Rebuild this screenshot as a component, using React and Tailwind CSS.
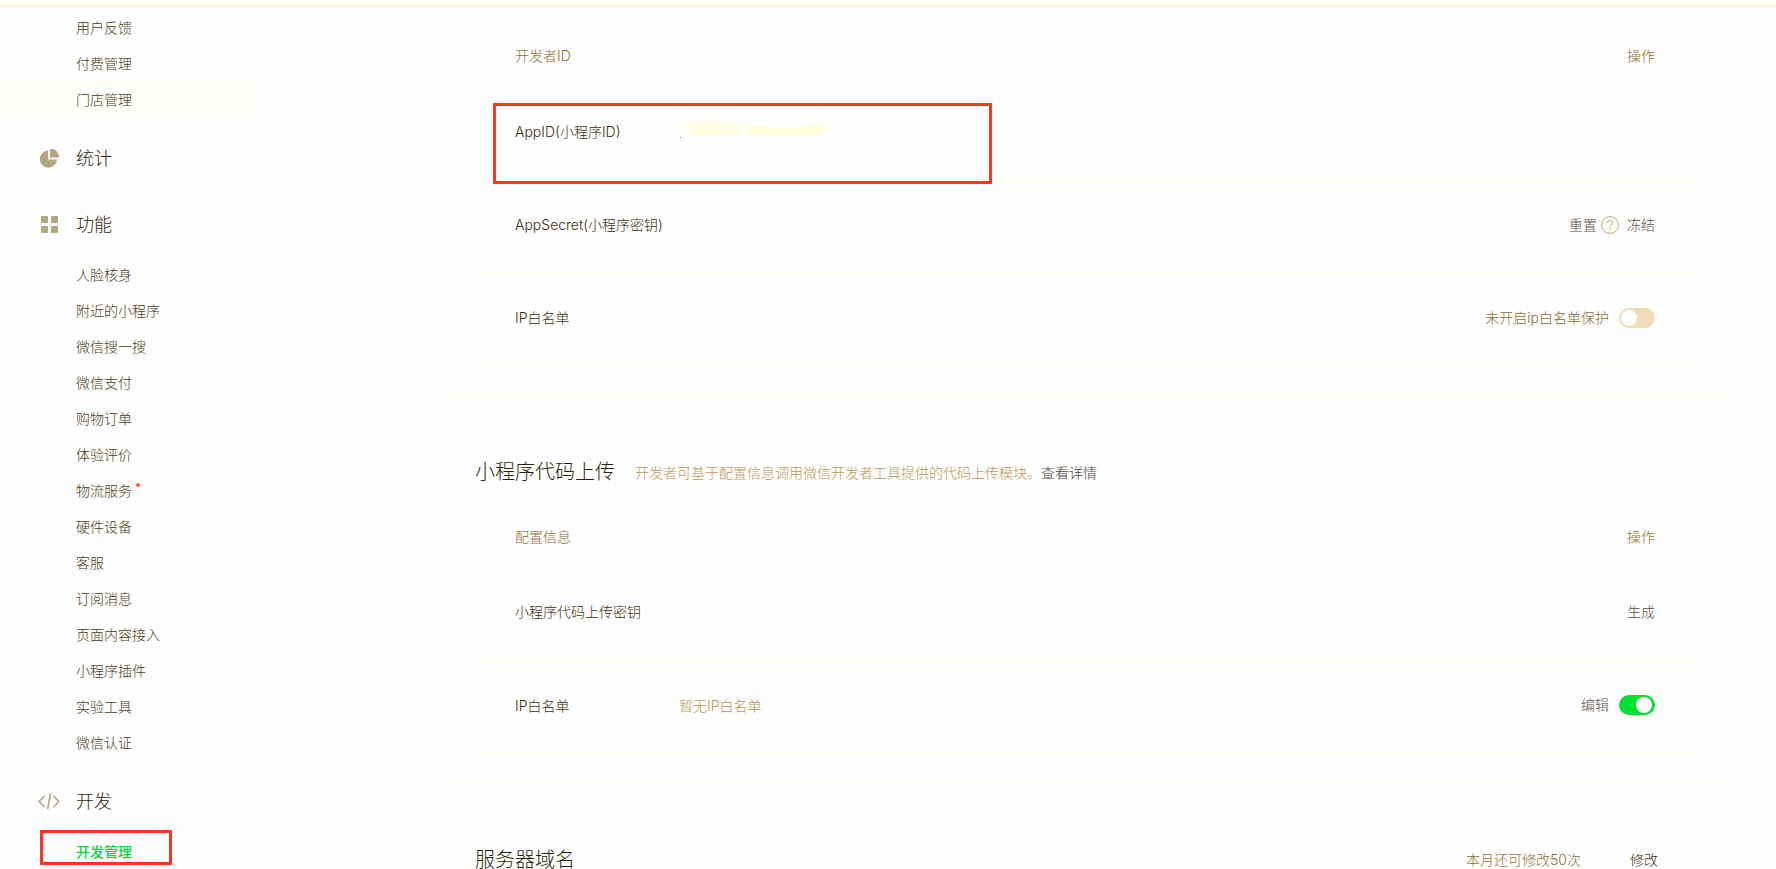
import clsx from "clsx";

const menuTop = ["用户反馈", "付费管理", "门店管理"];

const menuFeatures = [
  { label: "人脸核身" },
  { label: "附近的小程序" },
  { label: "微信搜一搜" },
  { label: "微信支付" },
  { label: "购物订单" },
  { label: "体验评价" },
  { label: "物流服务", dot: true },
  { label: "硬件设备" },
  { label: "客服" },
  { label: "订阅消息" },
  { label: "页面内容接入" },
  { label: "小程序插件" },
  { label: "实验工具" },
  { label: "微信认证" },
];

const PieIcon = () => (
  <svg className="w-5 h-5" viewBox="0 0 20 20" fill="#b5a682">
    <path d="M8 1.5A8.6 8.6 0 1 0 17 10.5H8z" />
    <path d="M10 -0.5A8.8 8.8 0 0 1 19 8.5H10z" />
  </svg>
);

const GridIcon = () => (
  <svg className="w-5 h-5" viewBox="0 0 20 20" fill="#b5a682">
    <rect x="1" y="1" width="7" height="7" rx="0.8" />
    <rect x="11" y="1" width="7" height="7" rx="0.8" />
    <rect x="1" y="11" width="7" height="7" rx="0.8" />
    <rect x="11" y="11" width="7" height="7" rx="0.8" />
  </svg>
);

const CodeIcon = () => (
  <svg className="w-5 h-5 overflow-visible" viewBox="0 0 20 20" fill="none" stroke="#b5a682" strokeWidth="1.6">
    <path d="M4.5 4L-0.8 9.5L4.5 15" />
    <path d="M13.5 4L18.8 9.5L13.5 15" />
    <path d="M10.6 1.5L7.6 17" />
  </svg>
);

const HelpIcon = () => (
  <svg className="w-[18px] h-[18px]" viewBox="0 0 18 18" fill="none" stroke="#c4a662">
    <circle cx="9" cy="9" r="8.4" />
    <path d="M6.4 7.2a2.6 2.6 0 1 1 3.8 2.2c-.8.5-1.2.9-1.2 2" />
    <path d="M9 12.6v1.4" />
  </svg>
);

const MenuItem = ({ label, dot, active, hover }) => (
  <li className={clsx("h-9", hover && "bg-[#fffffc]")}>
    <a
      href="#"
      className={clsx("flex items-center h-full pl-[76px] text-sm", active ? "text-[#06d83c] font-medium" : "text-[#4b3a12]")}
    >
      {label}
      {dot && <span className="w-1 h-1 mb-3 ml-1 rounded-full bg-[#ff5a36]" />}
    </a>
  </li>
);

const MenuHeading = ({ icon: Icon, label }) => (
  <>
    <div className="ml-[77px] mr-[72px] border-t border-[#fffcee]" />
    <h3 className="flex items-center h-[65px] pt-px pl-10 gap-4 text-lg text-[#33260a]">
      <Icon />
      {label}
    </h3>
  </>
);

const Switch = ({ label, checked }) => (
  <input
    type="checkbox"
    role="switch"
    aria-label={label}
    defaultChecked={checked}
    className="appearance-none w-9 h-5 rounded-full bg-[#f0dcb8] checked:bg-[#04e032] before:block before:w-4 before:h-4 before:m-[2px] before:rounded-full before:bg-white checked:before:ml-[17px]"
  />
);

const SettingsTable = ({ title, children }) => (
  <table className="w-full text-sm text-left text-[#3d2e0c]">
    <thead>
      <tr className="h-[60px] text-[#8f7030]">
        <th className="w-[204px] pl-10 font-light">{title}</th>
        <th />
        <th className="pr-10 font-light text-right">操作</th>
      </tr>
    </thead>
    <tbody>{children}</tbody>
  </table>
);

const Row = ({ label, value, marked, children }) => (
  <tr className="h-[93px] border-b border-[#fffde4]">
    <td className="relative pb-px pl-10 whitespace-nowrap">
      {label}
      {marked && <div className="absolute left-[18px] top-[17px] w-[499px] h-[81px] border-3 border-[#ff3320]" />}
    </td>
    <td className="pb-px text-[#b8954c]">{value}</td>
    <td className="pb-[2px] pr-10">
      <div className="flex items-center justify-end text-[#5f4f3f]">{children}</div>
    </td>
  </tr>
);

// AppID value is painted over
const Smudge = () => (
  <svg className="w-[150px] h-5 mb-2" viewBox="0 0 150 20">
    <path d="M0 6L12 3L34 3L70 6V18H0z" fill="#fffff2" />
    <path d="M12 3L34 3L60 6V18H12z" fill="#fffee4" />
    <path d="M70 6L92 9L120 9L145 5V17H70z" fill="#fffddc" />
    <rect x="1" y="19" width="1" height="1" fill="#8a7a50" />
  </svg>
);

const App = () => {
  return (
    <div className="flex flex-col h-screen overflow-hidden bg-[#fefefe] font-light font-[Inter,'Noto_Sans_CJK_SC',sans-serif]">
      <header className="shrink-0 h-[7px] border-b-2 border-[#fdf2d4]" />
      <div className="flex flex-1 min-h-0">

        {/* Sidebar */}
        <nav className="w-[257px] shrink-0 pt-[3px] border-r border-[#fffff4]">
          <ul className="pb-[7px]">
            {menuTop.map((label, i) => (
              <MenuItem key={label} label={label} hover={i === 2} />
            ))}
          </ul>
          <MenuHeading icon={PieIcon} label="统计" />
          <MenuHeading icon={GridIcon} label="功能" />
          <ul className="pb-[7px]">
            {menuFeatures.map((item) => (
              <MenuItem key={item.label} {...item} />
            ))}
          </ul>
          <MenuHeading icon={CodeIcon} label="开发" />
          <ul className="relative">
            <MenuItem label="开发管理" active />
            <div className="absolute left-10 -top-1 w-[132px] h-[35px] border-3 border-[#ff3320] pointer-events-none" />
          </ul>
        </nav>

        {/* Settings */}
        <main className="flex-1 ml-[187px] mr-[50px] border-x border-[#fffff6]">
          <section className="px-[30px] pt-[19px] pb-[29px] border-b border-[#ffffd8]">
            <SettingsTable title="开发者ID">
              <Row label="AppID(小程序ID)" value={<Smudge />} marked />
              <Row label="AppSecret(小程序密钥)">
                <button>重置</button>
                <span className="mx-1">
                  <HelpIcon />
                </span>
                <button className="ml-1">冻结</button>
              </Row>
              <Row label="IP白名单">
                <span className="mr-[10px] text-[#876a2c]">未开启ip白名单保护</span>
                <Switch label="IP白名单保护" />
              </Row>
            </SettingsTable>
          </section>

          <section className="px-[30px] pt-[62px] pb-[29px] border-b border-[#ffffd8]">
            <div className="flex items-center mb-[21px] h-7">
              <h2 className="text-xl text-[#2b1f06]">小程序代码上传</h2>
              <p className="pt-[2px] ml-5 text-sm text-[#bd9750]">
                开发者可基于配置信息调用微信开发者工具提供的代码上传模块。
                <a href="#" className="text-[#51433a]">查看详情</a>
              </p>
            </div>
            <SettingsTable title="配置信息">
              <Row label="小程序代码上传密钥">
                <button>生成</button>
              </Row>
              <Row label="IP白名单" value="暂无IP白名单">
                <button className="mr-[10px]">编辑</button>
                <Switch label="IP白名单" checked />
              </Row>
            </SettingsTable>
          </section>

          <section className="flex items-center px-[30px] pt-[61px]">
            <h2 className="text-xl text-[#2b1f06]">服务器域名</h2>
            <span className="ml-auto mr-3 text-sm text-[#8f7030]">本月还可修改50次</span>
            <button className="w-[102px] h-8 border border-[#fffeea] rounded-sm text-sm text-[#3d2e0c]">修改</button>
          </section>
        </main>
      </div>
    </div>
  );
};

export default App;
